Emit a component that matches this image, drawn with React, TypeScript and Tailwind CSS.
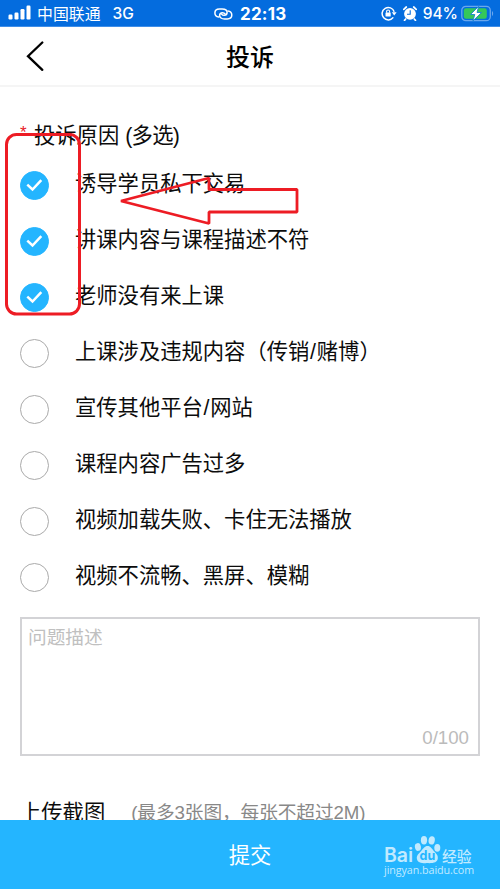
import React, { useState } from 'react';
import clsx from 'clsx';

const REASONS = [
    '诱导学员私下交易',
    '讲课内容与课程描述不符',
    '老师没有来上课',
    '上课涉及违规内容（传销/赌博）',
    '宣传其他平台/网站',
    '课程内容广告过多',
    '视频加载失败、卡住无法播放',
    '视频不流畅、黑屏、模糊',
];

function StatusBar() {
    return (
        <div className="relative flex h-[27px] shrink-0 items-center border-b border-[#3f8ee8] bg-[#046cde] pl-2 pr-1.5 text-white">
            <svg width="23" height="16" viewBox="0 0 23 16" fill="currentColor">
                <rect x="0.5" y="9.5" width="4" height="5" rx="1.2" />
                <rect x="6.5" y="7.5" width="4" height="7" rx="1.2" />
                <rect x="12.5" y="4" width="4" height="10.5" rx="1.2" />
                <rect x="18.5" y="0.5" width="4" height="14" rx="1.2" />
            </svg>
            <span className="ml-[6px] pt-[2px] font-['Noto_Sans_CJK_SC',sans-serif] text-[15.9px] leading-none">中国联通</span>
            <span className="ml-[12px] pt-[2px] font-['Inter',sans-serif] text-[15.5px] font-medium leading-none">3G</span>

            <div className="absolute left-[214px] top-0 flex h-[27px] items-center">
                <svg width="19" height="12" viewBox="0 0 19 12" fill="none" stroke="currentColor" strokeWidth="1.5" strokeLinecap="round">
                    <path d="M4.800 8.900C2.300 8.600.9 7 .9 4.900.9 2.600 2.600 1 5.400 1h2.800c2.900 0 4.900 1.500 4.900 3.500 0 1.700-1.300 2.800-2.900 2.800-1.200 0-2.100-.5-2.600-1.200" />
                    <path d="M13.900 3.100c2.500.3 3.900 1.900 3.900 4 0 2.300-1.700 3.900-4.500 3.900h-2.800c-2.900 0-4.900-1.500-4.900-3.500 0-1.700 1.300-2.800 2.900-2.800 1.200 0 2.100.5 2.600 1.200" />
                </svg>
                <span className="ml-[7px] pt-[2px] font-['Inter',sans-serif] text-[17px] font-bold leading-none tracking-[0.2px]">22:13</span>
            </div>

            <div className="ml-auto flex items-center">
                <svg width="16" height="15" viewBox="0 0 16 15" fill="none" stroke="currentColor" strokeWidth="1.5">
                    <path d="M12.300 11.400A6.200 6.200 0 1 1 13.200 5.700" />
                    <path d="M10.800 6.200h4.800l-2.400 3.400z" fill="currentColor" stroke="none" />
                    <rect x="4.500" y="6.500" width="5.200" height="4" rx=".6" fill="currentColor" stroke="none" />
                    <path d="M5.600 6.700V5.500a1.500 1.500 0 0 1 3 0v1.200" strokeWidth="1.100" />
                </svg>
                <svg className="ml-[6px]" width="14" height="15" viewBox="0 0 14 15" fill="none">
                    <circle cx="7" cy="7.800" r="5.900" fill="currentColor" />
                    <path d="M.8 3.300 3.300 1M13.200 3.300 10.700 1M2.700 13l-1.200 1.300M11.300 13l1.200 1.300" stroke="currentColor" strokeWidth="1.700" strokeLinecap="round" />
                    <path d="M7.200 4.200v4.100H4" stroke="#046cde" strokeWidth="1.100" />
                </svg>
                <span className="ml-[6px] pt-[2px] font-['Inter',sans-serif] text-[15.5px] font-medium leading-none">94%</span>
                <svg className="ml-[3px]" width="33" height="17" viewBox="0 0 33 17">
                    <rect x=".8" y="1.300" width="28.500" height="14.400" rx="4" fill="none" stroke="#69a7ed" strokeWidth="1.300" />
                    <path d="M31 6v5c1.500-.7 1.500-4.300 0-5z" fill="#69a7ed" />
                    <rect x="2.800" y="3.300" width="23" height="10.400" rx="2.200" fill="#35c759" />
                    <path d="M17.700 1.300 9.500 9.500h4.300l-1.900 6.500 8.700-8.500h-4.600z" fill="#fff" stroke="#1683ce" strokeWidth=".9" />
                </svg>
            </div>
        </div>
    );
}

function CheckCircle({ checked }: { checked: boolean }) {
    return (
        <span
            className={clsx(
                'flex size-[29px] shrink-0 items-center justify-center rounded-full border',
                checked ? 'border-[#24b5ff] bg-[#24b5ff]' : 'border-[#aaa] bg-white'
            )}
        >
            {checked && (
                <svg width="17" height="14" viewBox="0 0 17 14" fill="none" stroke="#fff" strokeWidth="2.500">
                    <path d="m1.300 6.700 5.200 4.800 8.800-9.300" />
                </svg>
            )}
        </span>
    );
}

// slashes get a little air on both sides
function ReasonLabel({ text }: { text: string }) {
    return (
        <span className="ml-[26px] whitespace-nowrap pb-[3px] text-[21.3px] leading-[28px]">
            {text.split(/(\/)/).map((part, i) => (
                <span key={i} className={clsx(part === '/' && 'px-[0.8px]')}>
                    {part}
                </span>
            ))}
        </span>
    );
}

function Watermark() {
    return (
        <div className="absolute left-[384px] top-[15px] flex h-[46px] flex-col whitespace-nowrap text-[#c1eaff]">
            <div className="flex h-[28px] items-end">
                <span className="mb-[-3px] w-[30px] font-['Inter',sans-serif] text-[19.5px] font-semibold leading-[22px]">Bai</span>
                <div className="relative h-[28px] w-[28px]">
                    <svg width="27" height="29" viewBox="0 0 27 29" fill="currentColor">
                        <ellipse cx="3.900" cy="12" rx="3" ry="3.900" transform="rotate(-10 3.900 12)" />
                        <ellipse cx="10" cy="5.200" rx="3.100" ry="4.200" />
                        <ellipse cx="17.700" cy="5.400" rx="3.100" ry="4.200" transform="rotate(10 17.700 5.400)" />
                        <ellipse cx="23.300" cy="12.800" rx="3" ry="3.900" />
                        <path d="M13.600 11c3 0 4.200 2.700 6.400 5.200 2 2.300 4.300 3.800 3.800 7.300-.6 4-4 4.800-10.300 4.600-6.200.2-10-.4-10.600-4.400-.5-3.600 2-5.200 4.100-7.500 2.200-2.400 3.600-5.200 6.600-5.200z" />
                    </svg>
                    <span className="absolute left-[5.5px] top-[14px] font-['Inter',sans-serif] text-[12.5px] font-bold leading-[14px] text-[#24b5ff]">du</span>
                </div>
                <span className="mb-[-2px] font-['Noto_Sans_CJK_SC',sans-serif] text-[14.8px] font-medium leading-[18px]">经验</span>
            </div>
            <span className="font-['Open_Sans',sans-serif] text-[10.7px] leading-[15px] tracking-[-0.05px]">jingyan.baidu.com</span>
        </div>
    );
}

export default function App() {
    const [selected, setSelected] = useState<number[]>([0, 1, 2]);
    const [description, setDescription] = useState('');

    const toggle = (index: number) => {
        setSelected((prev) => (prev.includes(index) ? prev.filter((i) => i !== index) : [...prev, index]));
    };

    return (
        <div className="relative flex h-[889px] w-[500px] flex-col overflow-hidden bg-white font-['Liberation_Sans','Noto_Sans_CJK_SC',sans-serif] text-[#0c0c0c]">
            <StatusBar />

            <header className="flex h-[60px] shrink-0 items-center border-b-2 border-[#f5f5f5] px-[26px]">
                <button type="button" aria-label="返回" className="w-[18px]">
                    <svg width="18" height="30" viewBox="0 0 18 30" fill="none" stroke="#000" strokeWidth="2.300" strokeLinecap="round">
                        <path d="M16.300 1.500 2 15.200l14.300 13.600" />
                    </svg>
                </button>
                <h1 className="flex-1 pr-[18px] pt-[3px] text-center text-[24px] font-medium leading-none text-black">投诉</h1>
            </header>

            <main className="relative min-h-0 flex-1 overflow-hidden px-5">
                <h2 className="flex h-[70px] items-end pb-[7px] text-[21.3px] leading-[28px]">
                    <span className="mb-[3px] mr-[7px] w-[7px] text-[17px] text-[#e8202a]">*</span>
                    投诉原因<span className="ml-[6px] tracking-[-0.7px]">(多选)</span>
                </h2>

                <ul>
                    {REASONS.map((reason, index) => (
                        <li key={reason}>
                            <button type="button" onClick={() => toggle(index)} className="flex h-14 w-full items-center text-left">
                                <CheckCircle checked={selected.includes(index)} />
                                <ReasonLabel text={reason} />
                            </button>
                        </li>
                    ))}
                </ul>

                <div className="mt-[12px] flex h-[139px] flex-col border-2 border-[#d3d3d6] pb-[5px] pl-[6px] pr-[9px] pt-[6px]">
                    <textarea
                        value={description}
                        onChange={(e) => setDescription(e.target.value)}
                        maxLength={100}
                        placeholder="问题描述"
                        className="min-h-0 flex-1 resize-none overflow-hidden text-[18.7px] leading-[26px] outline-none placeholder:text-[#c0c0c0]"
                    />
                    <span className="text-right text-[18.7px] leading-[22px] text-[#bbb]">{description.length}/100</span>
                </div>

                <div className="mt-[41px] flex items-center whitespace-nowrap">
                    <span className="text-[21.3px] leading-[32px]">上传截图</span>
                    <span className="ml-[26px] text-[18.7px] leading-[32px] tracking-[-0.1px] text-[#888]">(最多3张图，每张不超过2M)</span>
                </div>

                {/* hand-drawn annotation over the checked reasons */}
                <svg className="pointer-events-none absolute left-0 top-0" width="320" height="240" viewBox="0 87 320 240" fill="none" stroke="#ed1c24" strokeWidth="3">
                    <rect x="6.500" y="134.500" width="73" height="179.500" rx="10" />
                    <path d="M121 201 209 178v11.500h88V212h-88v11.500z" strokeWidth="2.800" strokeLinejoin="bevel" />
                </svg>
            </main>

            <footer className="relative flex h-[69px] shrink-0 bg-[#24b5ff]">
                <button type="button" className="flex-1 pt-[4px] text-[21.3px] leading-none text-white">提交</button>
                <Watermark />
            </footer>
        </div>
    );
}
